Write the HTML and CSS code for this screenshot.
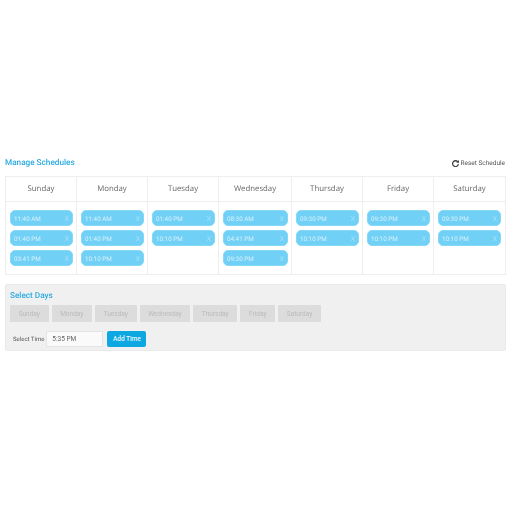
FILE: index.html
```html
<!DOCTYPE html>
<html lang="en">
  <head>
    <meta charset="UTF-8" />
    <title>Manage Schedules</title>
    <link rel="stylesheet" href="styles.css">
  </head>
  <body>
    <div class="page">
      <div class="top-row">
        <h2 class="title">Manage Schedules</h2>
        <a class="reset">
          <svg class="reset-icon" viewBox="0 0 12 12" width="7" height="7">
            <path d="M10 3.2A5 5 0 1 0 11 7" fill="none" stroke="#444" stroke-width="2.2" />
            <path d="M7.2 4.6H12V0z" fill="#444" />
          </svg>
          Reset Schedule
        </a>
      </div>

      <div class="schedule">
        <div class="day">
          <div class="day-name">Sunday</div>
          <div class="times">
            <div class="chip"><span>11:40 AM</span><span class="x">X</span></div>
            <div class="chip"><span>01:40 PM</span><span class="x">X</span></div>
            <div class="chip"><span>03:41 PM</span><span class="x">X</span></div>
          </div>
        </div>
        <div class="day">
          <div class="day-name">Monday</div>
          <div class="times">
            <div class="chip"><span>11:40 AM</span><span class="x">X</span></div>
            <div class="chip"><span>01:40 PM</span><span class="x">X</span></div>
            <div class="chip"><span>10:10 PM</span><span class="x">X</span></div>
          </div>
        </div>
        <div class="day">
          <div class="day-name">Tuesday</div>
          <div class="times">
            <div class="chip"><span>01:40 PM</span><span class="x">X</span></div>
            <div class="chip"><span>10:10 PM</span><span class="x">X</span></div>
          </div>
        </div>
        <div class="day">
          <div class="day-name">Wednesday</div>
          <div class="times">
            <div class="chip"><span>08:30 AM</span><span class="x">X</span></div>
            <div class="chip"><span>04:41 PM</span><span class="x">X</span></div>
            <div class="chip"><span>09:30 PM</span><span class="x">X</span></div>
          </div>
        </div>
        <div class="day">
          <div class="day-name">Thursday</div>
          <div class="times">
            <div class="chip"><span>09:30 PM</span><span class="x">X</span></div>
            <div class="chip"><span>10:10 PM</span><span class="x">X</span></div>
          </div>
        </div>
        <div class="day">
          <div class="day-name">Friday</div>
          <div class="times">
            <div class="chip"><span>09:30 PM</span><span class="x">X</span></div>
            <div class="chip"><span>10:10 PM</span><span class="x">X</span></div>
          </div>
        </div>
        <div class="day">
          <div class="day-name">Saturday</div>
          <div class="times">
            <div class="chip"><span>09:30 PM</span><span class="x">X</span></div>
            <div class="chip"><span>10:10 PM</span><span class="x">X</span></div>
          </div>
        </div>
      </div>

      <div class="select-panel">
        <h3 class="panel-title">Select Days</h3>
        <div class="day-buttons">
          <button class="day-btn">Sunday</button>
          <button class="day-btn">Monday</button>
          <button class="day-btn">Tuesday</button>
          <button class="day-btn">Wednesday</button>
          <button class="day-btn">Thursday</button>
          <button class="day-btn">Friday</button>
          <button class="day-btn">Saturday</button>
        </div>
        <div class="time-row">
          <label class="time-label" for="time">Select Time</label>
          <input class="time-input" id="time" type="text" value="5:35 PM" />
          <button class="add-btn">Add Time</button>
        </div>
      </div>
    </div>
  </body>
</html>
```

FILE: styles.css
```css
body {
  margin: 0;
  background: #fff;
  font-family: Roboto, "Open Sans", sans-serif;
  text-rendering: geometricPrecision;
}

.page {
  padding: 157px 6px 0 5px;
  filter: blur(0.4px);
}

.top-row {
  display: flex;
  justify-content: space-between;
  align-items: center;
  height: 12px;
  margin-bottom: 7px;
}

.title {
  margin: 0;
  font-size: 8.2px;
  font-weight: 500;
  color: #29abe2;
}

.reset {
  display: flex;
  align-items: center;
  gap: 1px;
  margin-right: 1px;
  font-size: 6.5px;
  color: #555;
}

.schedule {
  display: grid;
  grid-template-columns: repeat(3, 1fr) 73px repeat(3, 1fr);
  height: 99px;
  box-sizing: border-box;
  border: 1px solid #eee;
}

.day {
  border-right: 1px solid #eee;
}

.day:last-child {
  border-right: 0;
}

.day-name {
  height: 25px;
  box-sizing: border-box;
  line-height: 25px;
  text-align: center;
  font-family: "Open Sans", sans-serif;
  font-size: 7.8px;
  color: #666;
  border-bottom: 1px solid #eee;
}

.times {
  display: flex;
  flex-direction: column;
  gap: 4px;
  padding: 8px 3px 8px 4px;
}

.day:last-child .times {
  padding-right: 4px;
}

.chip {
  display: flex;
  justify-content: space-between;
  align-items: center;
  height: 16px;
  box-sizing: border-box;
  padding: 1px 3px 0;
  background: #71d0f5;
  border: 1px solid #86d8f7;
  border-radius: 5px;
  font-size: 6.3px;
  color: #d8f1fb;
}

.x {
  font-size: 6.8px;
  color: #a5e0f8;
}

.select-panel {
  margin-top: 9px;
  height: 67px;
  box-sizing: border-box;
  padding: 6px 4px;
  background: #f0f0f0;
  border: 1px solid #eaeaea;
  border-radius: 2px;
}

.panel-title {
  margin: 0 0 4px;
  height: 10px;
  line-height: 10px;
  font-size: 8.2px;
  font-weight: 500;
  color: #29abe2;
}

.day-buttons {
  display: flex;
  gap: 3px;
}

.day-btn {
  height: 17px;
  padding: 1px 8.65px 0;
  border: 0;
  border-radius: 1px;
  background: #dcdcdc;
  font-family: inherit;
  font-size: 6.5px;
  color: #bbb;
}

.time-row {
  display: flex;
  align-items: center;
  gap: 2px;
  margin-top: 9px;
}

.time-label {
  margin-left: 3px;
  font-size: 6px;
  color: #555;
}

.time-input {
  width: 57px;
  height: 16px;
  box-sizing: border-box;
  padding: 0 5px;
  border: 1px solid #e4e4e4;
  background: #fafafa;
  font-family: inherit;
  font-size: 6.5px;
  color: #666;
}

.add-btn {
  width: 39px;
  height: 16px;
  margin-left: 2px;
  padding: 0;
  border: 0;
  border-radius: 2px;
  background: #0ea7e2;
  font-family: inherit;
  font-size: 6.5px;
  font-weight: 500;
  color: #e6f6fd;
}
```
